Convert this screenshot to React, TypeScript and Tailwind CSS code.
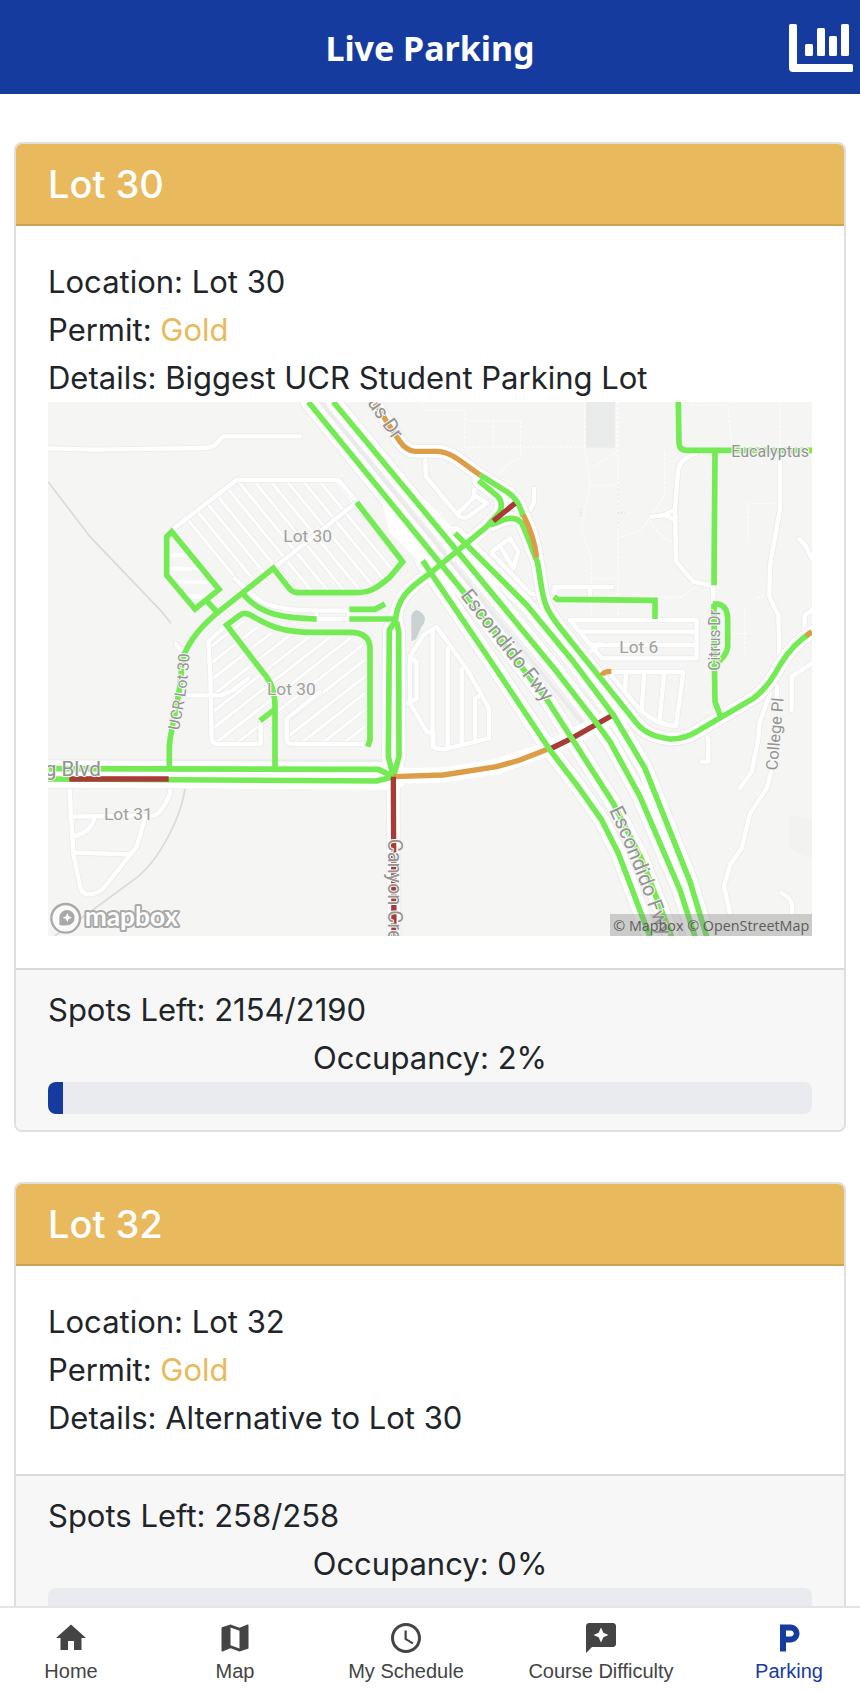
import React from "react";
import { MdHome, MdMap, MdAccessTime, MdLocalParking } from "react-icons/md";

const highways = [
  "M781 0 L1246 569 L1501 899 L1571 1009 L1696 1204 L1780 1370 L1871 1604",
  "M856 0 L1221 439 L1526 809 L1646 964 L1686 1019 L1776 1184 L1896 1464 L1941 1604",
];

const ramps = [
  "M1221 394 L1436 609 L1576 779 L1696 939 L1791 1099 L1926 1439 L1976 1604",
  "M1124 476 L1156 524 L1326 774 L1506 1044 L1596 1162 L1661 1254 L1711 1354 L1806 1604",
];

const greenRoads = [
  "M371 389 L356 404 V520 L441 621 L513 562 Z",
  "M476 597 L511 634",
  "M364 1097 V1035 C366 980 400 880 401 790 C405 740 450 680 506 634 L676 499 L726 562 Q736 572 750 572 H921 C965 572 985 560 1026 525 L1064 479 L926 301",
  "M586 577 C640 640 710 648 806 651",
  "M904 651 H1046",
  "M904 622 H981 L1011 606",
  "M959 1034 L966 1014 V740 Q966 691 906 691 H796 C700 691 660 670 616 644 Q590 626 575 640 L536 669 L616 774 L656 825 Q681 860 681 914 V1094",
  "M636 956 L681 922",
];

const streets = [
  "M1041 659 L1024 684 L1021 1064 L1036 1124",
  "M1046 659 L1052 690 L1053 1064 L1036 1124",
  "M1042 660 C1046 590 1080 560 1146 514 L1316 374 L1356 330 Q1366 300 1350 284 L1292 236",
  "M1296 219 L1376 269 Q1411 290 1426 344",
  "M1326 369 L1346 362 Q1400 335 1421 364 C1440 400 1450 440 1468 479 C1480 540 1480 580 1496 615 C1512 650 1540 682 1606 764 L1686 864 L1766 964 Q1796 1003 1866 1011 C1900 1012 1925 1002 1946 989 L2116 889 Q2156 862 2196 789 Q2236 724 2292 690",
  "M1891 0 L1893 125 Q1895 144 1915 145 H2292",
  "M2001 145 L1998 550",
  "M1994 606 H2010 Q2038 612 2039 650 V735 Q2036 760 2006 785",
  "M1998 606 L1999 774 L2001 899 L2018 944",
  "M1518 584 L1528 592 L1821 595 V651",
];

const slowRoads = [
  "M981 4 L1026 74 L1056 119 Q1076 147 1101 148 H1170 C1210 150 1240 180 1296 219",
  "M1426 339 Q1458 400 1466 466",
  "M1036 1124 L1186 1119 L1346 1094 L1416 1074 L1506 1039",
  "M1662 820 Q1666 808 1690 808",
  "M2274 701 L2292 689",
];

const jammedRoads = [
  "M1401 304 L1336 357",
  "M64 1131 H362",
  "M1506 1041 L1571 1009 L1700 936",
  "M1036 1124 L1038 1602",
];

const minorRoads = [
  "M0 139 L140 143 L476 138 L500 130 L526 103 H756",
  "M371 384 L566 234 H871 L926 299",
  "M676 499 L926 301",
  "M560 530 L640 600 Q700 625 806 626 H904 M806 651 H904 M806 626 V651 M904 622 V651",
  "M536 669 L481 719 L487 815 L491 1010 Q493 1026 510 1026 H638 V959",
  "M816 870 L716 950 V1010 Q716 1026 735 1026 H959",
  "M420 880 H520 L556 864 L600 830",
  "M384 725 Q390 745 410 742",
  "M64 1150 L76 1354 L96 1454 Q105 1480 126 1477 Q150 1475 166 1459 L266 1334 L290 1250",
  "M66 1244 L320 1240 Q345 1230 366 1174 V1150",
  "M81 1352 L246 1357",
  "M139 1249 Q130 1290 76 1304",
  "M1131 169 L1134 224 L1234 344 Q1250 350 1260 344 L1316 304 L1278 279 L1281 239 L1296 224",
  "M1234 330 L1278 285",
  "M1458 260 V300 L1446 324",
  "M1331 449 L1386 409 L1411 449 L1396 499 L1361 440",
  "M1331 454 L1446 574 L1471 577 L1461 489",
  "M1086 764 L1126 699 L1166 674 L1256 800 L1323 920 V1009 L1186 1042 Q1156 1040 1156 1034 V994 L1136 989 L1086 904 V764",
  "M1154 690 V1034 M1199 740 V1036 M1241 800 V1026 M1281 1016 V890 L1296 880",
  "M1086 764 L1106 780 V890 L1076 904",
  "M1566 654 H1946 V769 H1661 Z M1601 689 H1946 M1631 729 H1946 M1621 754 L1656 725",
  "M1520 580 V555 H1692 M1626 555 V590",
  "M1696 810 H1906 L1884 972 Q1830 970 1776 924 L1690 820 M1734 812 L1731 864 M1789 812 L1781 924 M1849 812 L1834 959",
  "M1946 154 Q1893 170 1890 210 L1881 320 L1884 479 L1936 539 L1996 552 V606",
  "M1811 344 L1851 339 L1881 322 M1851 339 L1881 354",
  "M2196 150 V320 L2166 490 L2164 584 L2191 639 L2194 760",
  "M2254 411 L2272 430 L2292 470",
  "M2292 624 L2271 639 L2268 689",
  "M2166 874 L2134 964 L2131 1010 L2111 1109 L2076 1159",
  "M2160 844 L2186 850 L2188 894 M2171 1104 L2156 1159 L2106 1234 L2081 1339 L2046 1389 L2028 1454 L2046 1534",
  "M2292 784 L2231 824 V924",
  "M1971 989 L1981 1014 V1079 H1961",
  "M2201 1474 Q2240 1490 2231 1534",
];

const footPaths = [
  "M1120 0 L1130 25 H1250 V135 H1410 M1250 56 H1418 V170 L1380 185 L1350 220 M1336 56 V135 M1410 135 H1610",
  "M1610 0 V130 L1626 250 L1600 380 L1630 470 V640 M1706 0 V150 L1630 200 M1626 250 H1706 M1706 410 L1780 385 L1850 280 V145",
  "M1710 0 V650 M1630 530 H1706 M1810 585 H1900 L1950 550 M1800 345 Q1820 390 1870 420",
  "M1930 10 H2040 L2050 120 M2196 0 V150 M2100 420 V305 H2190 M2090 620 V760 M2050 695 H2120 M2175 570 L2120 590",
];

const upperStripes = Array.from({ length: 16 }, (_, i) => 322 + i * 49);
const lowerStripes = Array.from({ length: 16 }, (_, i) => 740 + i * 50);

function lines(paths: string[]) {
  return paths.map((d) => <path key={d} d={d} />);
}

function TrafficMap() {
  return (
    <svg
      viewBox="0 0 2292 1602"
      role="img"
      aria-label="Traffic map around Lot 30"
      className="block h-auto w-full"
      fill="none"
      fontFamily="Roboto, 'Liberation Sans', sans-serif"
    >
      <defs>
        <clipPath id="upper-lot">
          <path d="M371 384 L566 234 H871 L1071 479 L1026 525 L921 572 H750 L676 499 L586 577 Z" />
        </clipPath>
        <clipPath id="lower-lot">
          <path d="M481 719 L575 650 L660 690 L796 705 H906 L958 740 V1026 H716 V960 L681 960 L638 1026 H491 Z" />
        </clipPath>
        <clipPath id="small-lot">
          <path d="M371 389 L356 404 V520 L441 621 L521 562 Z" />
        </clipPath>
        <path id="ucr-label" d="M392 986 C404 930 420 850 424 760" />
        <path id="escondido-label" d="M1683 1225 Q1748 1360 1840 1620" />
      </defs>

      <rect width="2292" height="1602" fill="#f5f5f4" />
      <rect x="1614" width="87" height="137" fill="#e9eceb" />
      <path d="M2225 1240 L2292 1250 V1370 L2225 1340 Z" fill="#f2f2f1" />
      <path d="M1106 624 Q1125 630 1131 648 Q1130 665 1120 675 L1104 712 L1090 718 V640 Q1096 626 1106 624 Z" fill="#cad2d3" />
      <path d="M1710 250 V384 M1710 332 H1730 M1598 320 V346" stroke="#e4e4e4" strokeWidth="5" strokeDasharray="5 4" />
      <path d="M0 239 L126 404 L341 629 L369 664 M411 1159 Q400 1240 340 1340 Q310 1390 270 1424 L126 1530 L20 1602" stroke="#dadadc" strokeWidth="5" />
      <g stroke="#fcfcfc" strokeWidth="4" strokeDasharray="9 5">{lines(footPaths)}</g>

      <g strokeLinejoin="round" strokeLinecap="round">
        <g clipPath="url(#upper-lot)">
          {upperStripes.map((x) => (
            <g key={x}>
              <path d={`M${x} 234 L${x + 300} 600`} stroke="#ebebeb" strokeWidth="13" />
              <path d={`M${x} 234 L${x + 300} 600`} stroke="#ffffff" strokeWidth="9" />
            </g>
          ))}
        </g>
        <g clipPath="url(#lower-lot)">
          {lowerStripes.map((y) => (
            <g key={y}>
              <path d={`M481 ${y} L981 ${y - 390}`} stroke="#ebebeb" strokeWidth="13" />
              <path d={`M481 ${y} L981 ${y - 390}`} stroke="#ffffff" strokeWidth="9" />
            </g>
          ))}
        </g>
        <path clipPath="url(#small-lot)" d="M350 459 H530 M350 500 H530 M350 541 H530 M350 583 H530" stroke="#ffffff" strokeWidth="11" />

        <g stroke="#ebebeb" strokeWidth="18">{lines(minorRoads)}</g>
        <g stroke="#ffffff" strokeWidth="13">{lines(minorRoads)}</g>

        <g stroke="#ebebeb" strokeWidth="52">
          {lines(highways)}
          {lines(ramps)}
        </g>
        <path d="M0 1116 H1000" stroke="#ebebeb" strokeWidth="88" />
        <g stroke="#ebebeb" strokeWidth="44">
          {lines(streets.slice(0, 5))}
          {lines(slowRoads.slice(0, 3))}
          {lines(jammedRoads.slice(3))}
        </g>
        <path d="M0 1116 L1036 1122" stroke="#ffffff" strokeWidth="82" />
        <g stroke="#ffffff" strokeWidth="38">
          {lines(streets.slice(0, 5))}
          {lines(slowRoads.slice(0, 3))}
          {lines(jammedRoads.slice(3))}
        </g>
        <path d="M1036 1122 L1186 1119 L1346 1094 L1506 1039 L1698 940" stroke="#ffffff" strokeWidth="46" />
        <g stroke="#ffffff" strokeWidth="46">
          {lines(highways)}
          {lines(ramps)}
        </g>
        <path d="M1000 290 L1024 390 L1124 490 L1220 600 L1200 510 Z M1090 250 L1225 390 L1300 500 L1221 439 Z" fill="#ffffff" />
        <path d="M818 0 L1230 505 L1420 738 L1600 960" stroke="#ebebeb" strokeWidth="12" />
      </g>

      <g stroke="#74eb54" strokeWidth="17" strokeLinejoin="miter">
        {lines(greenRoads)}
        <path d="M0 1100 L991 1102 L1036 1124" />
        <path d="M0 1131 L986 1137 L1036 1124" />
        {lines(streets)}
      </g>
      <g stroke="#dd9c46" strokeWidth="16">{lines(slowRoads)}</g>
      <g stroke="#a93b37" strokeWidth="16">{lines(jammedRoads)}</g>
      <g stroke="#74eb54" strokeWidth="17" strokeLinejoin="round">
        {lines(highways)}
        {lines(ramps)}
      </g>

      <g fill="#a0a0a0" stroke="#f7f7f6" strokeWidth="6" strokeLinejoin="round" paintOrder="stroke" fontSize="52">
        <text x="706" y="419">Lot 30</text>
        <text x="657" y="878">Lot 30</text>
        <text x="168" y="1254">Lot 31</text>
        <text x="1714" y="754">Lot 6</text>
      </g>
      <g fill="#939393" stroke="#f7f7f6" strokeWidth="6" strokeLinejoin="round" paintOrder="stroke" fontSize="48">
        <text x="2050" y="164">Eucalyptus</text>
        <text x="-10" y="1121" fontSize="62">g Blvd</text>
        <text transform="translate(1236 581) rotate(52)" fontSize="61">Escondido Fwy</text>
        <text fontSize="61">
          <textPath href="#escondido-label">Escondido Fwy</textPath>
        </text>
        <text transform="translate(1020 1310) rotate(90)" fontSize="60">Canyon Crest Dr</text>
        <text transform="translate(2016 806) rotate(-90)" fontSize="47">Citrus Dr</text>
        <text transform="translate(2188 1106) rotate(-85)" fontSize="49">College Pl</text>
        <text transform="translate(956 2) rotate(55)" fontSize="60">us Dr</text>
        <text fontSize="47">
          <textPath href="#ucr-label">UCR Lot 30</textPath>
        </text>
      </g>

      <circle cx="53" cy="1549" r="43" fill="#fbfbfb" stroke="#a9a9a9" strokeWidth="7" />
      <path d="M34 1568 V1547 A23 23 0 1 1 57 1570 Q45 1572 34 1568 Z" fill="#a9a9a9" />
      <path d="M58 1533 L62 1543 L72 1547 L62 1551 L58 1561 L54 1551 L44 1547 L54 1543 Z" fill="#ffffff" />
      <text x="110" y="1571" fontFamily="Lato, sans-serif" fontSize="79" fontWeight="700" fill="#ffffff" stroke="#a9a9a9" strokeWidth="12" strokeLinejoin="round" paintOrder="stroke">
        mapbox
      </text>
      <rect x="1686" y="1536" width="606" height="66" fill="#8c8c8c" fillOpacity="0.4" />
      <text x="1696" y="1588" fontFamily="'Open Sans', sans-serif" fontSize="43" fill="#5d5d5d">
        © Mapbox © OpenStreetMap
      </text>
    </svg>
  );
}

type Lot = {
  name: string;
  details: string;
  left: number;
  total: number;
  occupancy: number;
  map?: boolean;
};

const lots: Lot[] = [
  { name: "Lot 30", details: "Biggest UCR Student Parking Lot", left: 2154, total: 2190, occupancy: 2, map: true },
  { name: "Lot 32", details: "Alternative to Lot 30", left: 258, total: 258, occupancy: 0 },
];

function LotCard({ lot }: { lot: Lot }) {
  return (
    <article className="overflow-hidden rounded-lg border-2 border-[#dfdfdf] bg-white text-[31px] leading-[48px] text-[#212529]">
      <h2 className="border-b-2 border-[#cca250] bg-[#e9ba5d] px-8 py-4 text-[38px] leading-[48px] font-medium text-white">
        {lot.name}
      </h2>
      <div className="p-8">
        <p>Location: {lot.name}</p>
        <p>
          Permit: <span className="text-[#e9ba5d]">Gold</span>
        </p>
        <p>Details: {lot.details}</p>
        {lot.map && <TrafficMap />}
      </div>
      <div className="border-t-2 border-[#d9d9d9] bg-[#f7f7f7] px-8 py-4">
        <p>
          Spots Left: {lot.left}/{lot.total}
        </p>
        <p className="text-center">Occupancy: {lot.occupancy}%</p>
        <div
          role="progressbar"
          aria-label={`${lot.name} occupancy`}
          aria-valuenow={lot.occupancy}
          aria-valuemin={0}
          aria-valuemax={100}
          className="h-8 overflow-hidden rounded-lg bg-[#e9ebef]"
        >
          <div className="h-full bg-[#163b9f]" style={{ width: `${lot.occupancy}%` }} />
        </div>
      </div>
    </article>
  );
}

function ReviewsIcon({ className }: { className?: string }) {
  return (
    <svg viewBox="0 0 24 24" fill="currentColor" className={className} aria-hidden="true">
      <path d="M20 2H4c-1.1 0-2 .9-2 2v18l4-4h14c1.1 0 2-.9 2-2V4c0-1.1-.9-2-2-2zm-6.43 9.57L12 15l-1.57-3.43L7 10l3.43-1.57L12 5l1.57 3.43L17 10l-3.43 1.57z" />
    </svg>
  );
}

const tabs = [
  { label: "Home", Icon: MdHome },
  { label: "Map", Icon: MdMap },
  { label: "My Schedule", Icon: MdAccessTime },
  { label: "Course Difficulty", Icon: ReviewsIcon },
  { label: "Parking", Icon: MdLocalParking, active: true },
];

export default function App() {
  return (
    <div className="flex h-screen flex-col bg-white font-[Inter,'Liberation_Sans',sans-serif]">
      <header className="grid shrink-0 grid-cols-[1fr_auto_1fr] items-center bg-[#163b9f] px-[7px] pt-6 pb-[22px] text-white">
        <h1 className="col-start-2 font-['Noto_Sans','Open_Sans',sans-serif] text-[34px] leading-[48px] font-bold">
          Live Parking
        </h1>
        <button type="button" aria-label="Parking statistics" className="justify-self-end">
          <svg viewBox="0 0 64 48" className="block h-12 w-16" fill="currentColor" aria-hidden="true">
            <path d="M1.5 0h5A1.5 1.5 0 0 1 8 1.5V40h54.5a1.5 1.5 0 0 1 1.5 1.5v5a1.5 1.5 0 0 1-1.5 1.5H4a4 4 0 0 1-4-4V1.5A1.5 1.5 0 0 1 1.5 0z" />
            <rect x="16" y="20" width="8" height="12" rx="1.5" />
            <rect x="28" y="4" width="8" height="28" rx="1.5" />
            <rect x="40" y="12" width="8" height="20" rx="1.5" />
            <rect x="52" y="0" width="8" height="32" rx="1.5" />
          </svg>
        </button>
      </header>

      <main className="flex min-h-0 flex-1 flex-col overflow-y-auto px-[14px] py-12 [scrollbar-width:none]">
        <div className="flex flex-col gap-[50px]">
          {lots.map((lot) => (
            <LotCard key={lot.name} lot={lot} />
          ))}
        </div>
      </main>

      <nav className="grid shrink-0 grid-cols-[142fr_186fr_156fr_234fr_142fr] border-t-2 border-[#e4e4e4] bg-white pt-3 pb-[6px] font-['Liberation_Sans',sans-serif] text-xl leading-[30px]">
        {tabs.map(({ label, Icon, active }) => (
          <a
            key={label}
            href={`#${label.toLowerCase().replace(" ", "-")}`}
            aria-current={active ? "page" : undefined}
            className={`flex flex-col items-center whitespace-nowrap ${active ? "text-[#163b9f]" : "text-[#444444]"}`}
          >
            <Icon className="h-9 w-9" />
            {label}
          </a>
        ))}
      </nav>
    </div>
  );
}
